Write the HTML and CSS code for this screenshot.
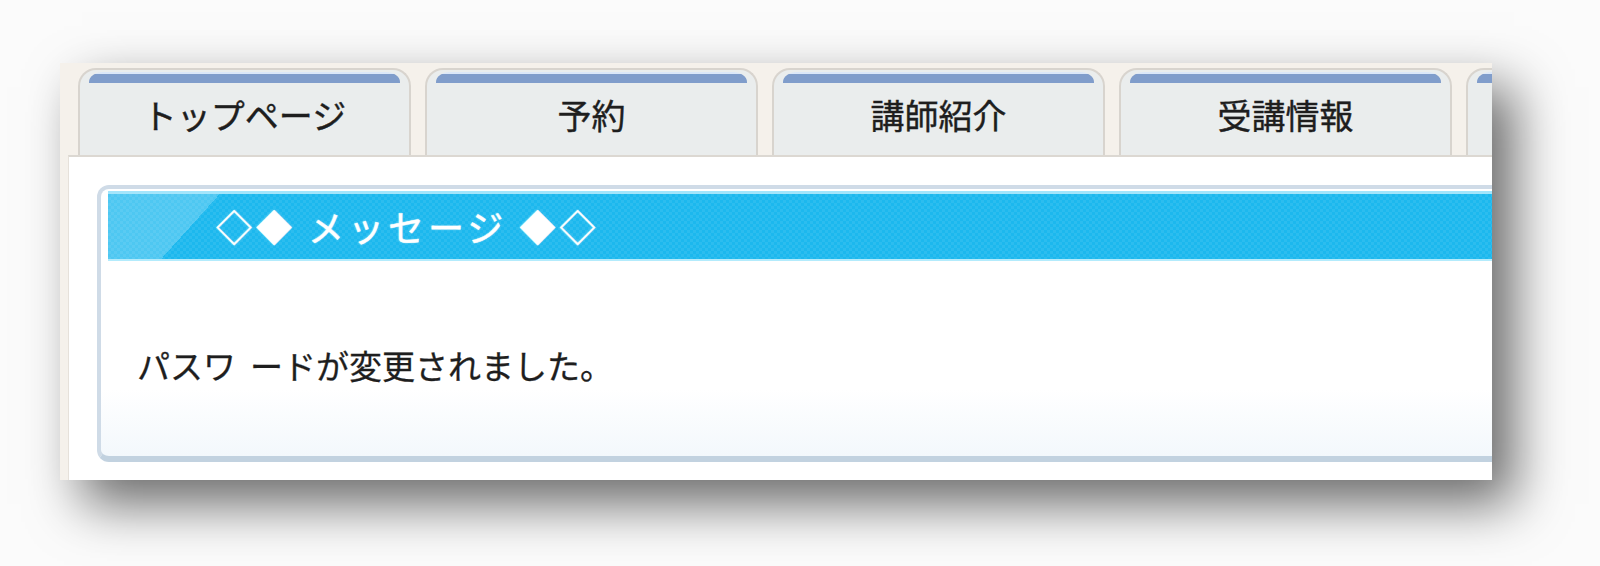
FILE: index.html
```html
<!DOCTYPE html>
<html lang="ja">
<head>
<meta charset="utf-8">
<title>メッセージ</title>
<link rel="stylesheet" href="styles.css">
</head>
<body>
<div class="frame">
  <div class="tabs">
    <div class="tab"><div class="band"></div><div class="label">トップページ</div></div>
    <div class="tab"><div class="band"></div><div class="label">予約</div></div>
    <div class="tab"><div class="band"></div><div class="label">講師紹介</div></div>
    <div class="tab"><div class="band"></div><div class="label">受講情報</div></div>
    <div class="tab"><div class="band"></div><div class="label"></div></div>
  </div>
  <div class="panel">
    <div class="msgbox">
      <div class="msghead">◇◆ メッセージ ◆◇</div>
      <div class="msgbody">パスワ<span class="gap"></span>ードが変更されました。</div>
    </div>
  </div>
</div>
</body>
</html>
```

FILE: styles.css
```css
html, body {
  margin: 0;
  padding: 0;
}
body {
  background: #fbfbfb;
  font-family: "Noto Sans CJK JP", "Noto Sans", sans-serif;
  width: 1600px;
  height: 566px;
  overflow: hidden;
}
.frame {
  margin: 63px 0 0 60px;
  width: 1432px;
  height: 417px;
  background: #f5f1eb;
  box-shadow: 22px 24px 50px rgba(0, 0, 0, 0.58);
  overflow: hidden;
  display: flex;
  flex-direction: column;
}
.tabs {
  display: flex;
  gap: 14px;
  padding: 5px 0 0 18px;
  height: 87px;
  flex: none;
}
.tab {
  flex: none;
  width: 333px;
  height: 87px;
  box-sizing: border-box;
  background: #eaeded;
  border: 2px solid #d8d4ce;
  border-bottom: none;
  border-radius: 18px 18px 0 0;
  display: flex;
  flex-direction: column;
}
.band {
  margin: 2px 9px 0;
  height: 11px;
  border-radius: 14px 14px 0 0 / 10px 10px 0 0;
  background: linear-gradient(#dbe7f8 0 2px, #809dcb 2px);
  flex: none;
}
.label {
  flex: 1;
  display: flex;
  align-items: center;
  justify-content: center;
  padding-bottom: 8px;
  font-size: 34px;
  line-height: 40px;
  color: #1e1e1e;
  white-space: nowrap;
  -webkit-text-stroke: 0.4px #1e1e1e;
}
.panel {
  flex: 1;
  margin-left: 8px;
  background: #ffffff;
  border-top: 2px solid #dcd8d2;
  border-left: 1px solid #e6e1da;
  padding: 28px 0 0 28px;
}
.msgbox {
  margin-right: -40px;
  border: 4px solid #cfdbe7;
  border-bottom: 6px solid #c2d2e0;
  border-radius: 12px;
  background: linear-gradient(#ffffff 75%, #f3f8fc);
  padding: 2px 0 0 7px;
}
.msghead {
  height: 70px;
  box-sizing: border-box;
  border-top: 3px solid #a3e5fb;
  border-bottom: 2px solid #b3ebfc;
  background:
    linear-gradient(132deg, rgba(255, 255, 255, 0.22) 0 83px, rgba(255, 255, 255, 0) 83px),
    repeating-conic-gradient(rgba(255, 255, 255, 0.07) 0 25%, rgba(255, 255, 255, 0) 0 50%) 0 0 / 6px 6px,
    #1cb8ee;
  color: #ffffff;
  font-size: 36px;
  letter-spacing: 4px;
  line-height: 65px;
  padding-left: 108px;
  white-space: nowrap;
  -webkit-text-stroke: 0.4px #ffffff;
  text-shadow: 0 0 2px rgba(255, 255, 255, 0.6);
}
.msgbody {
  padding: 84px 0 71px 29px;
  font-size: 33px;
  line-height: 40px;
  color: #1e1e1e;
  white-space: nowrap;
  -webkit-text-stroke: 0.3px #1e1e1e;
}
.gap {
  display: inline-block;
  width: 14px;
}
```
